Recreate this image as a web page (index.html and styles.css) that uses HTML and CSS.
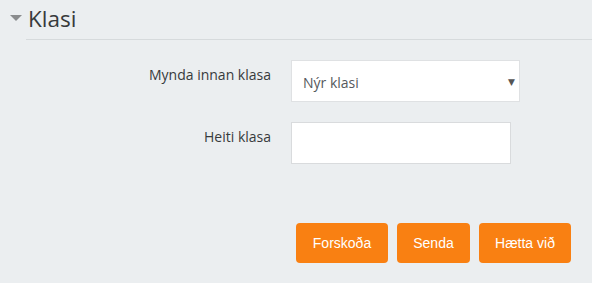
FILE: index.html
```html
<!DOCTYPE html>
<html>
<head>
<meta charset="utf-8">
<link rel="stylesheet" href="styles.css">
</head>
<body>
<div class="page">
  <div class="legend">
    <span class="caret"></span>
    <div class="legend-title">Klasi</div>
  </div>
  <div class="fields">
    <div class="row row-select">
      <label class="label">Mynda innan klasa</label>
      <div class="select">
        <span class="select-text">Nýr klasi</span>
        <span class="select-arrow">▼</span>
      </div>
    </div>
    <div class="row row-input">
      <label class="label">Heiti klasa</label>
      <div class="input"></div>
    </div>
  </div>
  <div class="buttons">
    <button class="btn btn-preview">Forskoða</button>
    <button class="btn btn-send">Senda</button>
    <button class="btn btn-cancel">Hætta við</button>
  </div>
</div>
</body>
</html>
```
FILE: styles.css
```css
html, body {
  margin: 0;
  padding: 0;
  background: #ebeef0;
}
body {
  width: 592px;
  height: 283px;
  overflow: hidden;
  font-family: "Open Sans", sans-serif;
  color: #373a3c;
}
.page {
  display: flex;
  flex-direction: column;
}
.legend {
  display: flex;
  align-items: flex-start;
  height: 40px;
  box-sizing: border-box;
}
.caret {
  width: 0;
  height: 0;
  border-left: 6px solid transparent;
  border-right: 6px solid transparent;
  border-top: 6px solid #8a8c8e;
  margin: 15px 0 0 10px;
}
.legend-title {
  flex: 1;
  margin-left: 4px;
  padding-left: 2px;
  height: 40px;
  box-sizing: border-box;
  border-bottom: 1px solid #d6dadc;
  font-size: 22.5px;
  line-height: 38px;
  color: #373a3c;
}
.fields {
  display: flex;
  flex-direction: column;
  gap: 20px;
  margin-top: 20px;
}
.row {
  display: flex;
  align-items: flex-start;
}
.label {
  width: 271px;
  text-align: right;
  font-size: 14px;
  line-height: 20px;
  padding-top: 5px;
  margin-right: 20px;
  color: #373a3c;
}
.select {
  width: 229px;
  height: 42px;
  box-sizing: border-box;
  background: #fff;
  border: 1px solid #dfe1e3;
  display: flex;
  align-items: center;
  justify-content: space-between;
  padding: 0 4px 0 11px;
}
.select-text {
  font-size: 14px;
  color: #55595c;
  padding-top: 2px;
}
.select-arrow {
  font-size: 9px;
  color: #555;
  font-family: "DejaVu Sans", sans-serif;
  padding-top: 2px;
}
.input {
  width: 220px;
  height: 42px;
  box-sizing: border-box;
  background: #fff;
  border: 1px solid #d9dbdd;
}
.buttons {
  display: flex;
  gap: 9px;
  margin-top: 59px;
  padding-left: 296px;
}
.btn {
  height: 40px;
  border: none;
  border-radius: 4px;
  background: #f98012;
  color: #fff;
  font-family: "Liberation Sans", Arial, sans-serif;
  font-size: 14px;
  padding: 0;
  margin: 0;
}
.btn-preview { width: 92px; }
.btn-send { width: 73px; }
.btn-cancel { width: 92px; }
```
